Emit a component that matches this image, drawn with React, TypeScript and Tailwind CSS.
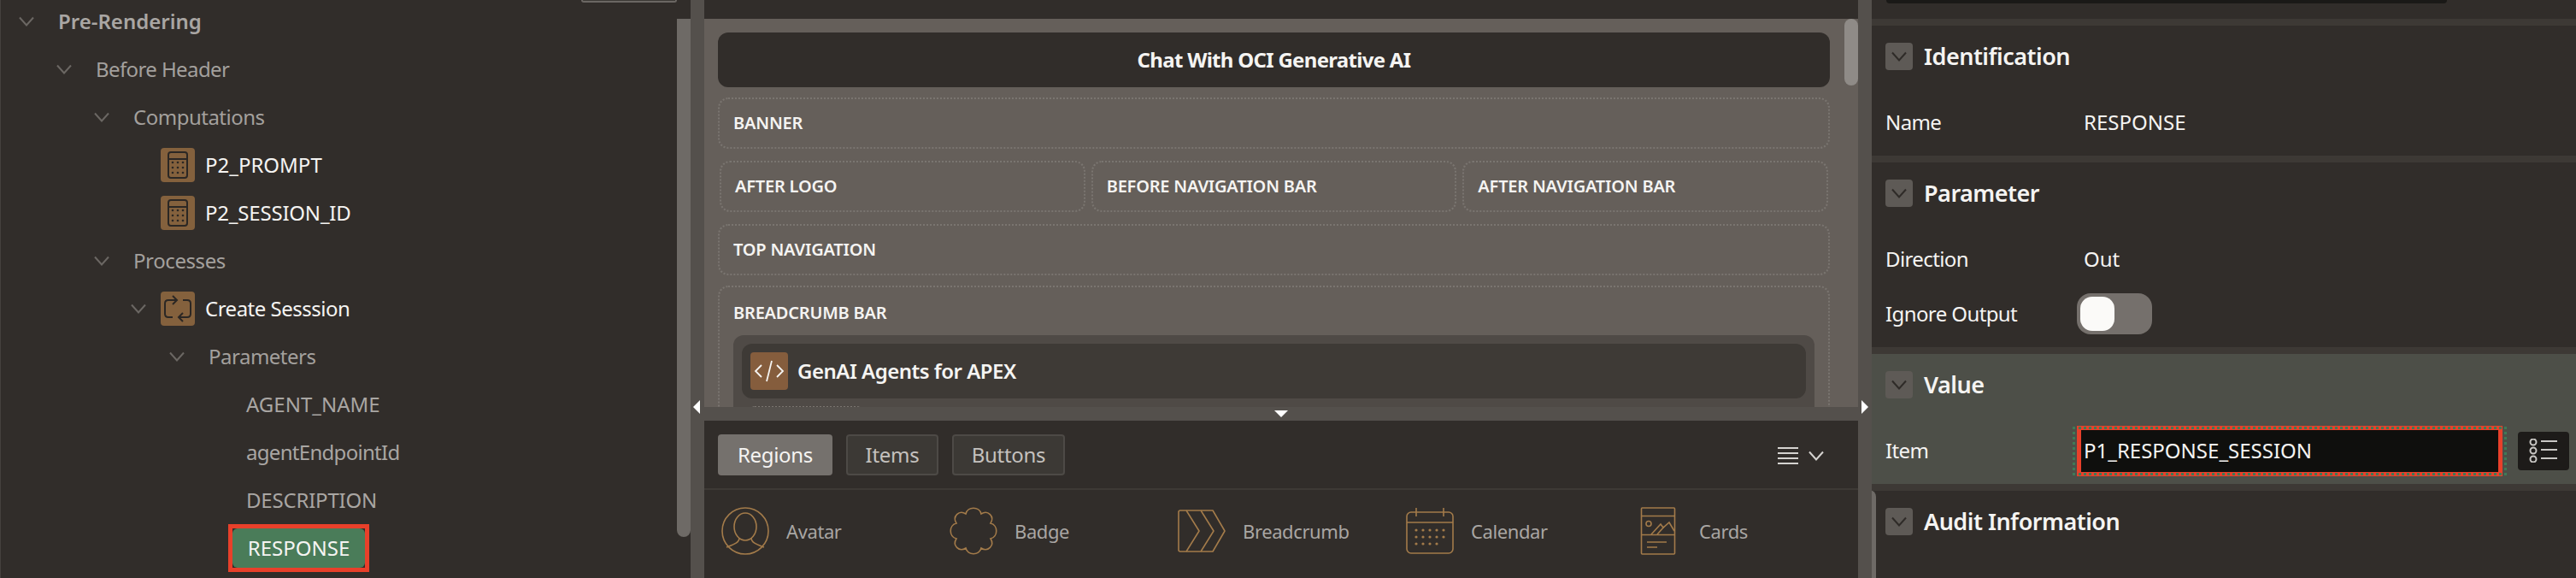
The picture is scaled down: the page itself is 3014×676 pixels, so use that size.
const font = { fontFamily: '"Noto Sans", sans-serif' };

const Chevron = ({ className = 'text-[#6b6763]' }: { className?: string }) => (
	<svg width="20" height="12" viewBox="0 0 20 12" fill="none" className={className}>
		<path d="M2 1.5 L10 10.5 L18 1.5" stroke="currentColor" strokeWidth="2" />
	</svg>
);

const CalcIcon = () => (
	<div className="flex h-10 w-10 shrink-0 items-center justify-center rounded bg-[#84613d]">
		<svg width="26" height="34" viewBox="0 0 26 34" fill="none">
			<rect x="2" y="2" width="22" height="30" rx="3" stroke="#2b2724" strokeWidth="2" />
			<path d="M2 10 H24" stroke="#2b2724" strokeWidth="2" />
			{[14, 20, 26].map((y) =>
				[7, 13, 19].map((x) => <circle key={`${x}-${y}`} cx={x} cy={y} r="1.3" fill="#2b2724" />)
			)}
		</svg>
	</div>
);

const CycleIcon = () => (
	<div className="flex h-10 w-10 shrink-0 items-center justify-center rounded bg-[#84613d]">
		<svg width="34" height="34" viewBox="0 0 34 34" fill="none" stroke="#2b2724" strokeWidth="2">
			<path d="M15 7 H6 Q2 7 2 11 V23 Q2 27 6 27 H11" />
			<path d="M19 27 H28 Q32 27 32 23 V11 Q32 7 28 7 H23" />
			<path d="M11 2 L16 7 L11 12" />
			<path d="M23 22 L18 27 L23 32" />
		</svg>
	</div>
);

const TreeRow = ({
	pad,
	chevron,
	icon,
	label,
	className
}: {
	pad: number;
	chevron?: boolean;
	icon?: React.ReactNode;
	label: string;
	className: string;
}) => (
	<div className="flex h-14 items-center" style={{ paddingLeft: pad }}>
		{chevron && (
			<span className="mr-[27px] flex w-5 shrink-0 justify-center">
				<Chevron />
			</span>
		)}
		{icon && <span className="mr-3">{icon}</span>}
		<span className={`whitespace-nowrap text-[24px] ${className}`}>{label}</span>
	</div>
);

const Splitter = ({ dir }: { dir: 'left' | 'right' }) => (
	<div className="relative h-full w-4 shrink-0 bg-[#54504c]">
		{dir === 'left' ? (
			<span className="absolute left-[3px] top-[468px] h-0 w-0 border-y-[8px] border-r-[8px] border-y-transparent border-r-white" />
		) : (
			<span className="absolute left-[4px] top-[468px] h-0 w-0 border-y-[8px] border-l-[8px] border-y-transparent border-l-white" />
		)}
	</div>
);

const Slot = ({ label, className = '' }: { label: string; className?: string }) => (
	<div
		className={`flex h-[60px] items-center rounded-xl border-2 border-dotted border-[#7a7570] pl-4 text-[20px] font-semibold tracking-[-0.2px] text-[#f5f4f2] ${className}`}
	>
		{label}
	</div>
);

const stroke = '#a37b4a';

const AvatarIcon = () => (
	<svg width="56" height="56" viewBox="0 0 56 56" fill="none" stroke={stroke} strokeWidth="1.6">
		<circle cx="28" cy="28" r="27" />
		<ellipse cx="28" cy="23" rx="13" ry="16" />
		<path d="M21 36 C21 42 14 44 6 47" />
		<path d="M35 36 C35 42 42 44 50 47" />
	</svg>
);

const BadgeIcon = () => (
	<svg width="56" height="56" viewBox="0 0 56 56" fill="none" stroke={stroke} strokeWidth="1.6">
		<path d="M19 8 C21 -1 35 -1 37 8 C45 3 53 11 48 19 C57 21 57 35 48 37 C53 45 45 53 37 48 C35 57 21 57 19 48 C11 53 3 45 8 37 C-1 35 -1 21 8 19 C3 11 11 3 19 8 Z" />
	</svg>
);

const BreadcrumbIcon = () => (
	<svg width="56" height="56" viewBox="0 0 56 56" fill="none" stroke={stroke} strokeWidth="1.6" strokeLinejoin="round">
		<path d="M3 4 H41 L55 28 L41 52 H3 Q1 52 1 50 V6 Q1 4 3 4 Z" />
		<path d="M10 4 L25 28 L10 52" />
		<path d="M27 4 L42 28 L27 52" />
	</svg>
);

const CalendarIcon = () => (
	<svg width="56" height="56" viewBox="0 0 56 56" fill="none" stroke={stroke} strokeWidth="1.6">
		<rect x="1" y="6" width="54" height="48" rx="5" />
		<path d="M1 18 H55 M12 1 V11 M44 1 V11" />
		{[27, 35, 43].map((y, r) =>
			[12, 20, 28, 36, 44].slice(0, r === 2 ? 4 : 5).map((x) => (
				<circle key={`${x}-${y}`} cx={x} cy={y} r="1.6" fill={stroke} stroke="none" />
			))
		)}
	</svg>
);

const CardsIcon = () => (
	<svg width="56" height="56" viewBox="0 0 56 56" fill="none" stroke={stroke} strokeWidth="1.6">
		<rect x="8.5" y="1" width="39" height="54" rx="1" />
		<path d="M8.5 10.5 H47.5 M8.5 32.5 H47.5" />
		<circle cx="17" cy="19.5" r="3" />
		<path d="M20 32 L31 20 L34 24 L41 18 L47 28" />
		<path d="M27 32 L35 23" />
		<path d="M15 41 H38 M15 47 H27" />
	</svg>
);

const CodeIcon = () => (
	<div className="flex h-11 w-11 shrink-0 items-center justify-center rounded bg-[#855d3d]">
		<svg width="36" height="28" viewBox="0 0 36 28" fill="none" stroke="#f5f4f2" strokeWidth="1.8">
			<path d="M9 7 L2 14 L9 21 M27 7 L34 14 L27 21 M21 2 L15 26" />
		</svg>
	</div>
);

const GalleryItem = ({ icon, label }: { icon: React.ReactNode; label: string }) => (
	<div className="flex w-[267px] shrink-0 items-center gap-5">
		{icon}
		<span className="text-[22px] tracking-[-0.4px] text-[#a9a6a3]">{label}</span>
	</div>
);

const Tab = ({ label, active }: { label: string; active?: boolean }) => (
	<div
		className={`flex h-12 items-center justify-center rounded text-[24px] tracking-[-0.3px] ${
			active ? 'w-[134px] bg-[#75716d] text-[#f5f4f2]' : 'border-2 border-[#4d4a46] bg-[#3c3935] text-[#c4c1be]'
		} ${label === 'Items' ? 'w-[108px]' : ''} ${label === 'Buttons' ? 'w-[132px]' : ''}`}
	>
		{label}
	</div>
);

const SectionHead = ({ title }: { title: string }) => (
	<div className="flex h-8 items-center">
		<span className="flex h-8 w-8 items-center justify-center rounded bg-[#5e5a56]">
			<Chevron className="text-[#2f2b28]" />
		</span>
		<span className="ml-[13px] text-[27px] font-semibold tracking-[-0.5px] text-[#f5f4f2]">{title}</span>
	</div>
);

const PropRow = ({ label, children }: { label: string; children: React.ReactNode }) => (
	<div className="flex h-16 items-center text-[24px] text-[#f5f4f2]">
		<span className="w-[224px] shrink-0 tracking-[-0.6px]">{label}</span>
		{children}
	</div>
);

export default function App() {
	return (
		<div className="flex h-[676px] w-[3014px] overflow-hidden bg-[#312d2a]" style={font}>
			{/* page tree */}
			<div className="relative flex h-full w-[808px] shrink-0 border-l border-[#45413e]">
				<div className="absolute left-[679px] top-0 h-[3px] w-[112px] rounded-b border-x-2 border-b-2 border-[#6b6763] bg-[#3c3935]" />
				<div className="-mt-[3px] flex-1">
					<TreeRow pad={20} chevron label="Pre-Rendering" className="font-semibold text-[#a9a6a3]" />
					<TreeRow pad={64} chevron label="Before Header" className="tracking-[-0.6px] text-[#a3a09d]" />
					<TreeRow pad={108} chevron label="Computations" className="tracking-[-0.5px] text-[#a3a09d]" />
					<TreeRow pad={187} icon={<CalcIcon />} label="P2_PROMPT" className="text-[#f5f4f2]" />
					<TreeRow pad={187} icon={<CalcIcon />} label="P2_SESSION_ID" className="tracking-[-0.2px] text-[#f5f4f2]" />
					<TreeRow pad={108} chevron label="Processes" className="tracking-[-0.4px] text-[#a3a09d]" />
					<div className="flex h-14 items-center pl-[151px]">
						<span className="mr-[16px] flex w-5 justify-center">
							<Chevron />
						</span>
						<CycleIcon />
						<span className="ml-3 text-[24px] tracking-[-0.5px] text-[#f5f4f2]">Create Sesssion</span>
					</div>
					<TreeRow pad={196} chevron label="Parameters" className="tracking-[-0.5px] text-[#a3a09d]" />
					<TreeRow pad={287} label="AGENT_NAME" className="text-[#a9a6a3]" />
					<TreeRow pad={287} label="agentEndpointId" className="tracking-[-0.7px] text-[#a9a6a3]" />
					<TreeRow pad={287} label="DESCRIPTION" className="tracking-[-0.2px] text-[#a9a6a3]" />
					<div className="flex h-14 items-center pl-[266px]">
						<div className="border-[5px] border-[#e8402a]">
							<div className="flex h-[46px] w-[155px] items-center justify-center rounded-md bg-[#4a7c59] text-[24px] text-[#f5f4f2]">
								RESPONSE
							</div>
						</div>
					</div>
				</div>
				<div className="mt-[22px] h-[606px] w-4 shrink-0 rounded-b-lg bg-[#6e6a66]" />
			</div>

			<Splitter dir="left" />

			{/* layout editor and gallery */}
			<div className="flex h-full w-[1350px] shrink-0 flex-col">
				<div className="h-[22px] shrink-0" />
				<div className="flex h-[454px] shrink-0 overflow-hidden bg-[#655f5a]">
					<div className="flex-1 pl-4 pr-[17px] pt-4">
						<div className="flex h-16 items-center justify-center rounded-xl bg-[#312d2a] text-[24px] font-bold tracking-[-0.7px] text-[#f5f4f2]">
							Chat With OCI Generative AI
						</div>
						<Slot label="BANNER" className="mt-3" />
						<div className="mx-0.5 mt-[14px] flex gap-[7px]">
							<Slot label="AFTER LOGO" className="flex-1" />
							<Slot label="BEFORE NAVIGATION BAR" className="flex-1" />
							<Slot label="AFTER NAVIGATION BAR" className="flex-1" />
						</div>
						<Slot label="TOP NAVIGATION" className="mt-[14px]" />
						<div className="mt-3 h-[200px] rounded-xl border-2 border-dotted border-[#7a7570] px-4 pt-4">
							<div className="text-[20px] font-semibold leading-7 tracking-[-0.2px] text-[#f5f4f2]">BREADCRUMB BAR</div>
							<div className="mt-3 h-[120px] rounded-xl bg-[#4f4a46] px-2.5 pt-2.5">
								<div className="flex h-16 items-center rounded-xl bg-[#3e3a36] pl-2.5">
									<CodeIcon />
									<span className="ml-[11px] text-[24px] font-semibold tracking-[-0.5px] text-[#f5f4f2]">GenAI Agents for APEX</span>
								</div>
								<div className="ml-[11px] mt-[9px] h-6 w-[128px] rounded border-2 border-dotted border-[#7a7570]" />
							</div>
						</div>
					</div>
					<div className="h-[78px] w-4 shrink-0 rounded-lg bg-[#8f8b87]" />
				</div>
				<div className="relative h-4 shrink-0 bg-[#54504c]">
					<span className="absolute left-[667px] top-1 h-0 w-0 border-x-[8px] border-t-[8px] border-x-transparent border-t-white" />
				</div>
				<div className="flex h-[81px] shrink-0 items-start justify-between border-b-2 border-[#3d3935] pl-4 pr-[39px] pt-4">
					<div className="flex gap-4">
						<Tab label="Regions" active />
						<Tab label="Items" />
						<Tab label="Buttons" />
					</div>
					<div className="mt-3.5 flex items-center gap-[11px]">
						<svg width="24" height="22" viewBox="0 0 24 22" stroke="#d5d3d0" strokeWidth="2">
							<path d="M0 2 H24 M0 8 H24 M0 14 H24 M0 20 H24" />
						</svg>
						<Chevron className="text-[#d5d3d0]" />
					</div>
				</div>
				<div className="flex flex-1 justify-between">
					<div className="flex items-start pl-5 pt-5">
						<GalleryItem icon={<AvatarIcon />} label="Avatar" />
						<GalleryItem icon={<BadgeIcon />} label="Badge" />
						<GalleryItem icon={<BreadcrumbIcon />} label="Breadcrumb" />
						<GalleryItem icon={<CalendarIcon />} label="Calendar" />
						<GalleryItem icon={<CardsIcon />} label="Cards" />
					</div>
					<div className="h-full w-4 shrink-0 rounded-t-lg bg-[#6e6a66]" />
				</div>
			</div>

			<Splitter dir="right" />

			{/* property editor */}
			<div className="h-full flex-1">
				<div className="h-[22px]">
					<div className="ml-[17px] h-1 w-[656px] rounded-b bg-[#1a1917]" />
				</div>
				<div className="h-2 bg-[#3d3935]" />
				<div className="h-[152px] px-4 pt-5">
					<SectionHead title="Identification" />
					<div className="mt-[29px]">
						<PropRow label="Name">
							<span className="pl-2">RESPONSE</span>
						</PropRow>
					</div>
				</div>
				<div className="h-2 bg-[#3d3935]" />
				<div className="h-[216px] px-4 pt-5">
					<SectionHead title="Parameter" />
					<div className="mt-[29px]">
						<PropRow label="Direction">
							<span className="pl-2">Out</span>
						</PropRow>
						<PropRow label="Ignore Output">
							<div className="flex h-12 w-[88px] items-center rounded-2xl bg-[#75706c] pl-1">
								<span className="h-10 w-10 rounded-[14px] bg-[#fbfaf8]" />
							</div>
						</PropRow>
					</div>
				</div>
				<div className="h-2 bg-[#3d3935]" />
				<div className="h-[152px] bg-[#4d4f48] px-4 pt-5">
					<SectionHead title="Value" />
					<div className="mt-[29px]">
						<PropRow label="Item">
							<div className="relative flex h-[59px] w-[498px] items-center border-[5px] border-[#e8402a] bg-[#0f0f0d] pl-[3px]">
								<span className="absolute -bottom-1 -left-2.5 -right-2.5 -top-1 border-[3px] border-dotted border-[#3f7a57]" />
								P1_RESPONSE_SESSION
							</div>
							<div className="ml-[18px] flex h-[45px] w-[60px] items-center justify-center rounded bg-[#1d1b19]">
								<svg width="34" height="28" viewBox="0 0 34 28" fill="none" stroke="#c9c7c4" strokeWidth="2">
									<circle cx="5" cy="4" r="3.5" />
									<circle cx="5" cy="14" r="3.5" />
									<circle cx="5" cy="24" r="3.5" />
									<path d="M14 3 H33 M14 13 H33 M14 23 H33" />
								</svg>
							</div>
						</PropRow>
					</div>
				</div>
				<div className="h-2 bg-[#3d3935]" />
				<div className="px-4 pt-5">
					<SectionHead title="Audit Information" />
				</div>
			</div>
		</div>
	);
}
